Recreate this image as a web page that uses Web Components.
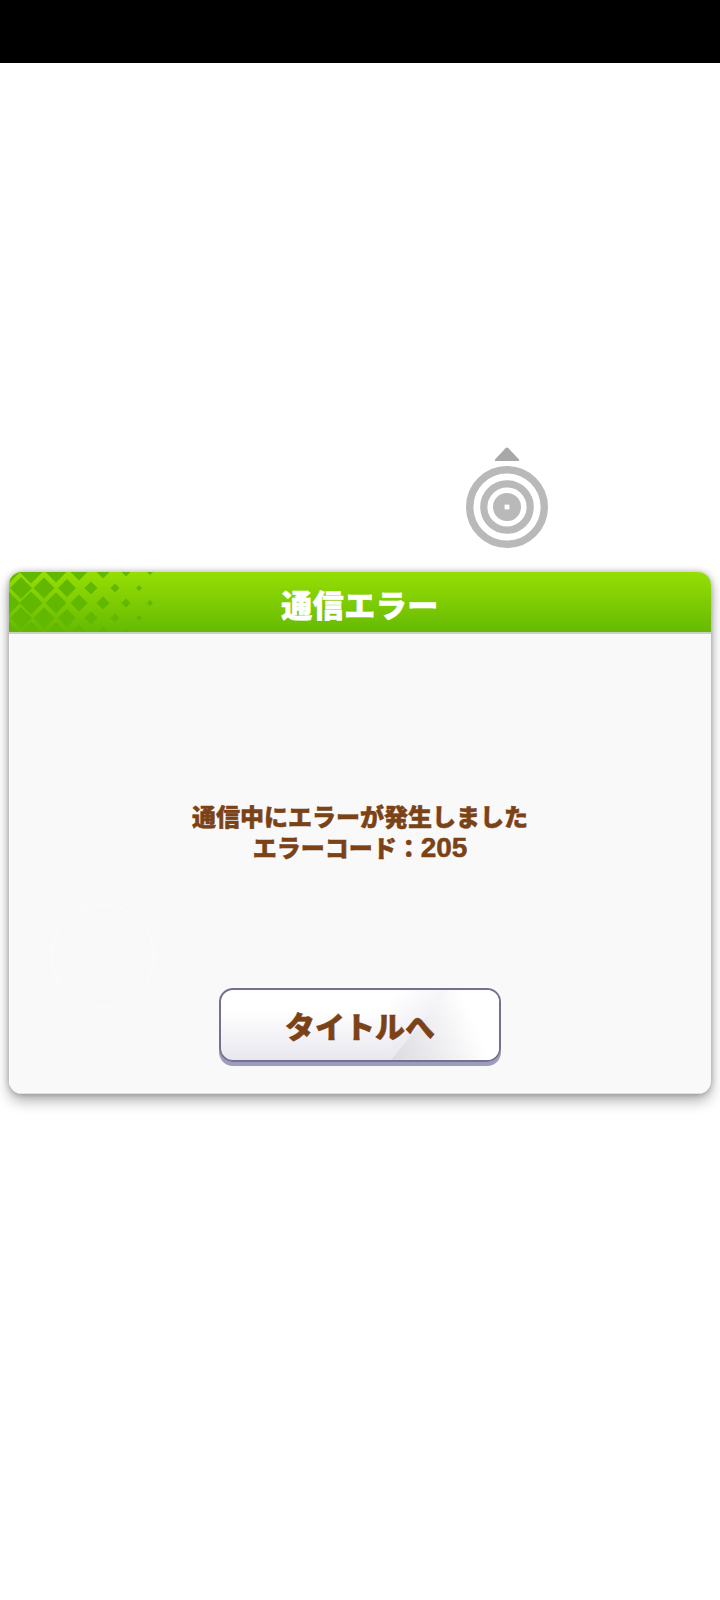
<!DOCTYPE html>
<html lang="ja"><head><meta charset="utf-8"><title>通信エラー</title>
<style>html,body{margin:0;padding:0;background:#fff}</style></head>
<body>
<error-screen>
  <target-spinner slot="spinner"></target-spinner>
  <error-dialog slot="dialog" heading="通信エラー">
    <msg-line>通信中にエラーが発生しました</msg-line>
    <msg-line>エラーコード：<b style="font:700 28px 'Liberation Sans',sans-serif">205</b></msg-line>
    <game-button slot="action">タイトルへ</game-button>
  </error-dialog>
</error-screen>
<script>
function def(name, html){
  customElements.define(name, class extends HTMLElement{
    constructor(){super();this.attachShadow({mode:'open'}).innerHTML=html;}
    connectedCallback(){
      const h=this.shadowRoot.querySelector('[data-heading]');
      if(h) h.textContent=this.getAttribute('heading')||'';
    }
  });
}
def('error-screen',`<style>
:host{display:flex;flex-direction:column;width:720px;height:1600px;background:#fff;overflow:hidden}
.bar{height:63px;background:#000;flex:none}
.spin{display:flex;padding:384px 0 0 466px;height:125px;flex:none}
.dlg{display:block;padding:0 9px;flex:none}
</style><div class="bar"></div><div class="spin"><slot name="spinner"></slot></div><div class="dlg"><slot name="dialog"></slot></div>`);
def('target-spinner',`<style>:host{display:block;width:84px;height:104px}svg{display:block}</style>
<svg width="84" height="104" viewBox="0 0 84 104"><path d="M41 0.5 Q41.8 0.5 42.5 1.2 L53 12.5 Q54 14 52 14 L30 14 Q28 14 29 12.5 L39.5 1.2 Q40.2 0.5 41 0.5Z" fill="#a8a8a8"/>
<g fill="none" stroke="#b9b9b9"><circle cx="41" cy="60" r="37.3" stroke-width="7.4"/><circle cx="41" cy="60" r="23.2" stroke-width="7.2"/></g>
<circle cx="41" cy="60" r="14" fill="#b9b9b9"/><rect x="38.6" y="57.6" width="4.8" height="4.8" fill="#fff"/></svg>`);
(function(){
  const rows=[[0,0],[16,1],[31,0],[46,1],[61,0]];
  const a=[[-1,12],[22,11.5],[47,10.5],[70,8.5],[94,6.5],[117,4.5],[141,3]];
  const b=[[12,11],[35,10.5],[58,9],[82,6.5],[106,4.5],[130,3]];
  let d='';
  for(const [y,t] of rows){
    for(const [x,r] of (t?b:a)){
      d+=`M${x} ${y-r}L${x+r} ${y}L${x} ${y+r}L${x-r} ${y}Z`;
    }
  }
  window.__diamonds=d;
})();
def('msg-line',`<style>:host{display:block;font-size:24px;line-height:31px;font-weight:900;color:#7a4216;text-align:center;-webkit-text-stroke:.5px #7a4216;white-space:nowrap;font-family:"Noto Sans CJK JP",sans-serif}</style><slot></slot>`);
def('error-dialog',`<style>
:host{display:flex;flex-direction:column;width:702px;height:522px;border-radius:13px;background:#f9f9f9;box-shadow:0 7px 14px rgba(0,0,0,.3),0 0 6px rgba(0,0,0,.28);font-family:"Noto Sans CJK JP","Noto Sans",sans-serif;overflow:hidden}
header{height:60px;flex:none;position:relative;background:linear-gradient(#96de03,#66ba04);display:flex;align-items:center;justify-content:center;border-bottom:2px solid #c9d2c2}
header svg{position:absolute;left:0;top:0}
h1{margin:3px 0 0;font-size:31px;line-height:40px;font-weight:900;color:#fff;letter-spacing:.5px;position:relative;-webkit-text-stroke:.6px #fff}
.body{flex:1;position:relative;display:flex;flex-direction:column;align-items:center;box-shadow:inset 1px 0 0 #fff,inset 0 -1px 0 #e0e0e0}
.ghost{position:absolute;left:42px;top:270px;width:104px;height:104px;border-radius:50%;border:2px solid #fbfbfb;box-sizing:border-box;filter:blur(1px)}
.msg{margin-top:166px;height:188px;position:relative}
</style>
<header><svg width="160" height="60" viewBox="0 0 160 60"><path d="${window.__diamonds}" fill="#62b700"/></svg><h1 data-heading></h1></header>
<div class="body"><div class="ghost"></div><div class="msg"><slot></slot></div><slot name="action"></slot></div>`);
def('game-button',`<style>
:host{display:flex;align-items:center;justify-content:center;width:282px;height:74px;box-sizing:border-box;position:relative;border:2px solid #72728e;border-radius:14px;background:linear-gradient(#fff 30%,#e8e7ef);box-shadow:0 4px 0 #9d9cbc;font-family:"Noto Sans CJK JP","Noto Sans",sans-serif}
svg{position:absolute;left:0;top:0;border-radius:12px}
span{position:relative;font-size:30px;font-weight:900;color:#7a4216;line-height:40px;-webkit-text-stroke:.5px #7a4216}
</style>
<svg width="278" height="70" viewBox="0 0 278 70"><defs>
<linearGradient id="s" x1="170" y1="60" x2="250" y2="25" gradientUnits="userSpaceOnUse"><stop offset="0" stop-color="#dcdce2"/><stop offset="1" stop-color="#fff"/></linearGradient>
<linearGradient id="w" x1="180" y1="0" x2="205" y2="35" gradientUnits="userSpaceOnUse"><stop offset="0" stop-color="#fff"/><stop offset="1" stop-color="#ecebf2"/></linearGradient></defs>
<path d="M170 0H227L170 70Z" fill="url(#w)" opacity=".8"/><path d="M227 0H278V70H170Z" fill="url(#s)"/></svg>
<span><slot></slot></span>`);
</script>
</body></html>
